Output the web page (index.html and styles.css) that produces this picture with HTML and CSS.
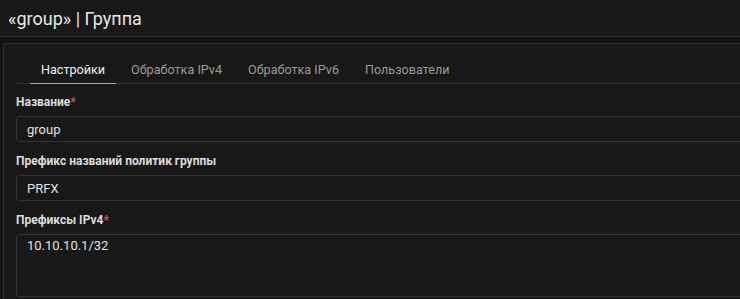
FILE: index.html
```html
<!DOCTYPE html>
<html lang="ru">
  <head>
    <meta charset="UTF-8" />
    <title>Группа</title>
    <link rel="stylesheet" href="styles.css">
  </head>
  <body>
    <header class="page-header">
      <h1>«group» | Группа</h1>
    </header>

    <main class="content">
      <section class="panel">
        <nav class="tabs">
          <a class="tab active">Настройки</a>
          <a class="tab">Обработка IPv4</a>
          <a class="tab">Обработка IPv6</a>
          <a class="tab">Пользователи</a>
        </nav>

        <form class="form">
          <div class="field">
            <label for="groupName">Название<span class="req">*</span></label>
            <input id="groupName" type="text" value="group" />
          </div>
          <div class="field">
            <label for="groupPrefix">Префикс названий политик группы</label>
            <input id="groupPrefix" type="text" value="PRFX" />
          </div>
          <div class="field">
            <label for="groupIpv4">Префиксы IPv4<span class="req">*</span></label>
            <textarea id="groupIpv4">10.10.10.1/32</textarea>
          </div>
        </form>
      </section>
    </main>
  </body>
</html>
```

FILE: styles.css
```css
body {
  font-family: Roboto, 'Liberation Sans', sans-serif;
  margin: 0;
  padding: 0;
  background-color: #131313;
  color: #e3e3e3;
  overflow: hidden;
}

.page-header {
  height: 36px;
  background: #181818;
  border-bottom: 1px solid #333;
  display: flex;
  align-items: center;
  padding: 0 8px;
}

.page-header h1 {
  margin: 0;
  font-size: 18px;
  font-weight: 400;
  color: #e6e6e6;
}

.content {
  padding: 6px 0 0 3px;
}

.panel {
  background: #181818;
  border: 1px solid #333;
  border-right: none;
  border-radius: 4px 0 0 4px;
  padding: 0 0 0 12px;
  height: 270px;
}

/* tabs */
.tabs {
  display: flex;
  gap: 4px;
  margin-top: 13px;
  padding-left: 14px;
  border-bottom: 1px solid #333;
}

.tab {
  padding: 0 11px 1px;
  height: 25px;
  line-height: 25px;
  font-size: 12.6px;
  color: #9b9b9b;
  margin-bottom: -1px;
  border-bottom: 1px solid transparent;
}

.tab.active {
  color: #eeeeee;
  border-bottom-color: #6fbcdc;
}

/* form */
.form {
  display: flex;
  flex-direction: column;
  gap: 12px;
  padding-top: 11px;
}

.field {
  display: flex;
  flex-direction: column;
  gap: 6px;
}

.field label {
  font-size: 12px;
  font-weight: 700;
  line-height: 15px;
  color: #dcdcdc;
}

.req {
  color: #e0504d;
}

.field input,
.field textarea {
  box-sizing: border-box;
  background: #181818;
  border: 1px solid #333;
  border-right: none;
  border-radius: 4px 0 0 4px;
  color: #e3e3e3;
  font-family: inherit;
  font-size: 13px;
  padding: 0 10px;
  outline: none;
  margin: 0;
}

.field input {
  height: 26px;
}

.field textarea {
  height: 63px;
  padding-top: 3px;
  resize: none;
}
```
